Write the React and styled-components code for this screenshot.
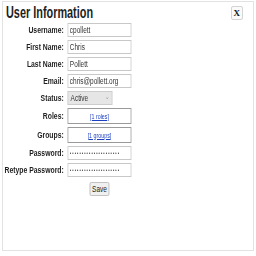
import React from 'react';
import styled, { createGlobalStyle } from 'styled-components';

const GlobalStyle = createGlobalStyle`
  html, body { margin: 0; padding: 0; background: #fff; }
  body { font-family: "Liberation Sans", Arial, sans-serif; }
`;

function App() {
    return (
        <>
            <GlobalStyle />
            <Panel>
                <Header>
                    <Title>User Information</Title>
                    <CloseButton>X</CloseButton>
                </Header>
                <Form>
                    <Label>Username:</Label>
                    <Field><TextInput defaultValue="cpollett" /></Field>
                    <Label>First Name:</Label>
                    <Field><TextInput defaultValue="Chris" /></Field>
                    <Label>Last Name:</Label>
                    <Field><TextInput defaultValue="Pollett" /></Field>
                    <Label>Email:</Label>
                    <Field><TextInput defaultValue="chris@pollett.org" /></Field>
                    <Label>Status:</Label>
                    <Field>
                        <Select>
                            <span>Active</span>
                            <Arrow>⌄</Arrow>
                        </Select>
                    </Field>
                    <Label tall>Roles:</Label>
                    <Field><ListBox><a href="#roles">[1 roles]</a></ListBox></Field>
                    <Label tall>Groups:</Label>
                    <Field><ListBox><a href="#groups">[1 groups]</a></ListBox></Field>
                    <Label>Password:</Label>
                    <Field><TextInput type="password" defaultValue="passwordpassword12345" /></Field>
                    <Label>Retype Password:</Label>
                    <Field><TextInput type="password" defaultValue="passwordpassword12345" /></Field>
                    <span />
                    <Actions>
                        <SaveButton>Save</SaveButton>
                    </Actions>
                </Form>
            </Panel>
        </>
    );
}

/* the page is drawn narrow: text runs at ~3/4 of its normal width */
const Panel = styled.div`
    box-sizing: border-box;
    width: 252px;
    height: 250px;
    margin: 1px 0 0 2px;
    border: 1px solid #e2e2e2;
    padding: 2px 4px 2px 3px;
`;

const Header = styled.div`
    display: flex;
    justify-content: space-between;
    align-items: flex-start;
`;

const Title = styled.h1`
    margin: 0;
    font-size: 16px;
    font-weight: bold;
    color: #1e1e1e;
    line-height: 18px;
    white-space: nowrap;
    transform: scaleX(0.68);
    transform-origin: left center;
`;

const CloseButton = styled.button`
    margin: 2px 6px 0 0;
    padding: 0 2px;
    height: 14px;
    font-family: "Liberation Serif", serif;
    font-size: 9px;
    font-weight: bold;
    line-height: 12px;
    background: #fafafa;
    border: 1px solid #d4d4d4;
    border-radius: 2px;
    color: #111;
`;

const Form = styled.div`
    display: grid;
    grid-template-columns: 76px 84px;
    column-gap: 5px;
    row-gap: 3px;
    align-items: center;
    margin-top: 1px;
    transform: scaleX(0.76);
    transform-origin: left top;
`;

const Label = styled.div`
    display: flex;
    justify-content: flex-end;
    white-space: nowrap;
    font-size: 9px;
    font-weight: bold;
    color: #1e1e1e;
    align-self: ${p => (p.tall ? 'start' : 'center')};
    padding-top: ${p => (p.tall ? '3px' : '0')};
`;

const Field = styled.div`
    display: flex;
`;

const TextInput = styled.input`
    box-sizing: border-box;
    width: 84px;
    height: 14px;
    padding: 0 2px;
    border: 1px solid #c8c8c8;
    font-family: "Liberation Sans", Arial, sans-serif;
    font-size: 8.5px;
    color: #333;
    outline: none;
    &[type="password"] {
        font-size: 5px;
        letter-spacing: 1.4px;
    }
`;

const Select = styled.div`
    box-sizing: border-box;
    width: 59px;
    height: 14px;
    padding: 0 3px;
    display: flex;
    align-items: center;
    justify-content: space-between;
    background: #e6e6e6;
    border: 1px solid #ccc;
    font-size: 8.5px;
    color: #333;
`;

const Arrow = styled.span`
    font-size: 7px;
    color: #999;
    line-height: 1;
    margin-top: -3px;
`;

const ListBox = styled.div`
    box-sizing: border-box;
    width: 84px;
    height: 16px;
    border: 1px solid #9a9a9a;
    display: flex;
    align-items: center;
    justify-content: center;
    font-size: 7px;
    a { color: #1a3fbf; text-decoration: underline; }
`;

const Actions = styled.div`
    display: flex;
    justify-content: center;
    width: 84px;
    margin-top: 2px;
`;

const SaveButton = styled.button`
    height: 14px;
    padding: 0 2px;
    font-family: "Liberation Sans", Arial, sans-serif;
    font-size: 8.5px;
    color: #222;
    background: #f0f0f0;
    border: 1px solid #bbb;
    border-radius: 2px;
`;

export default App;
